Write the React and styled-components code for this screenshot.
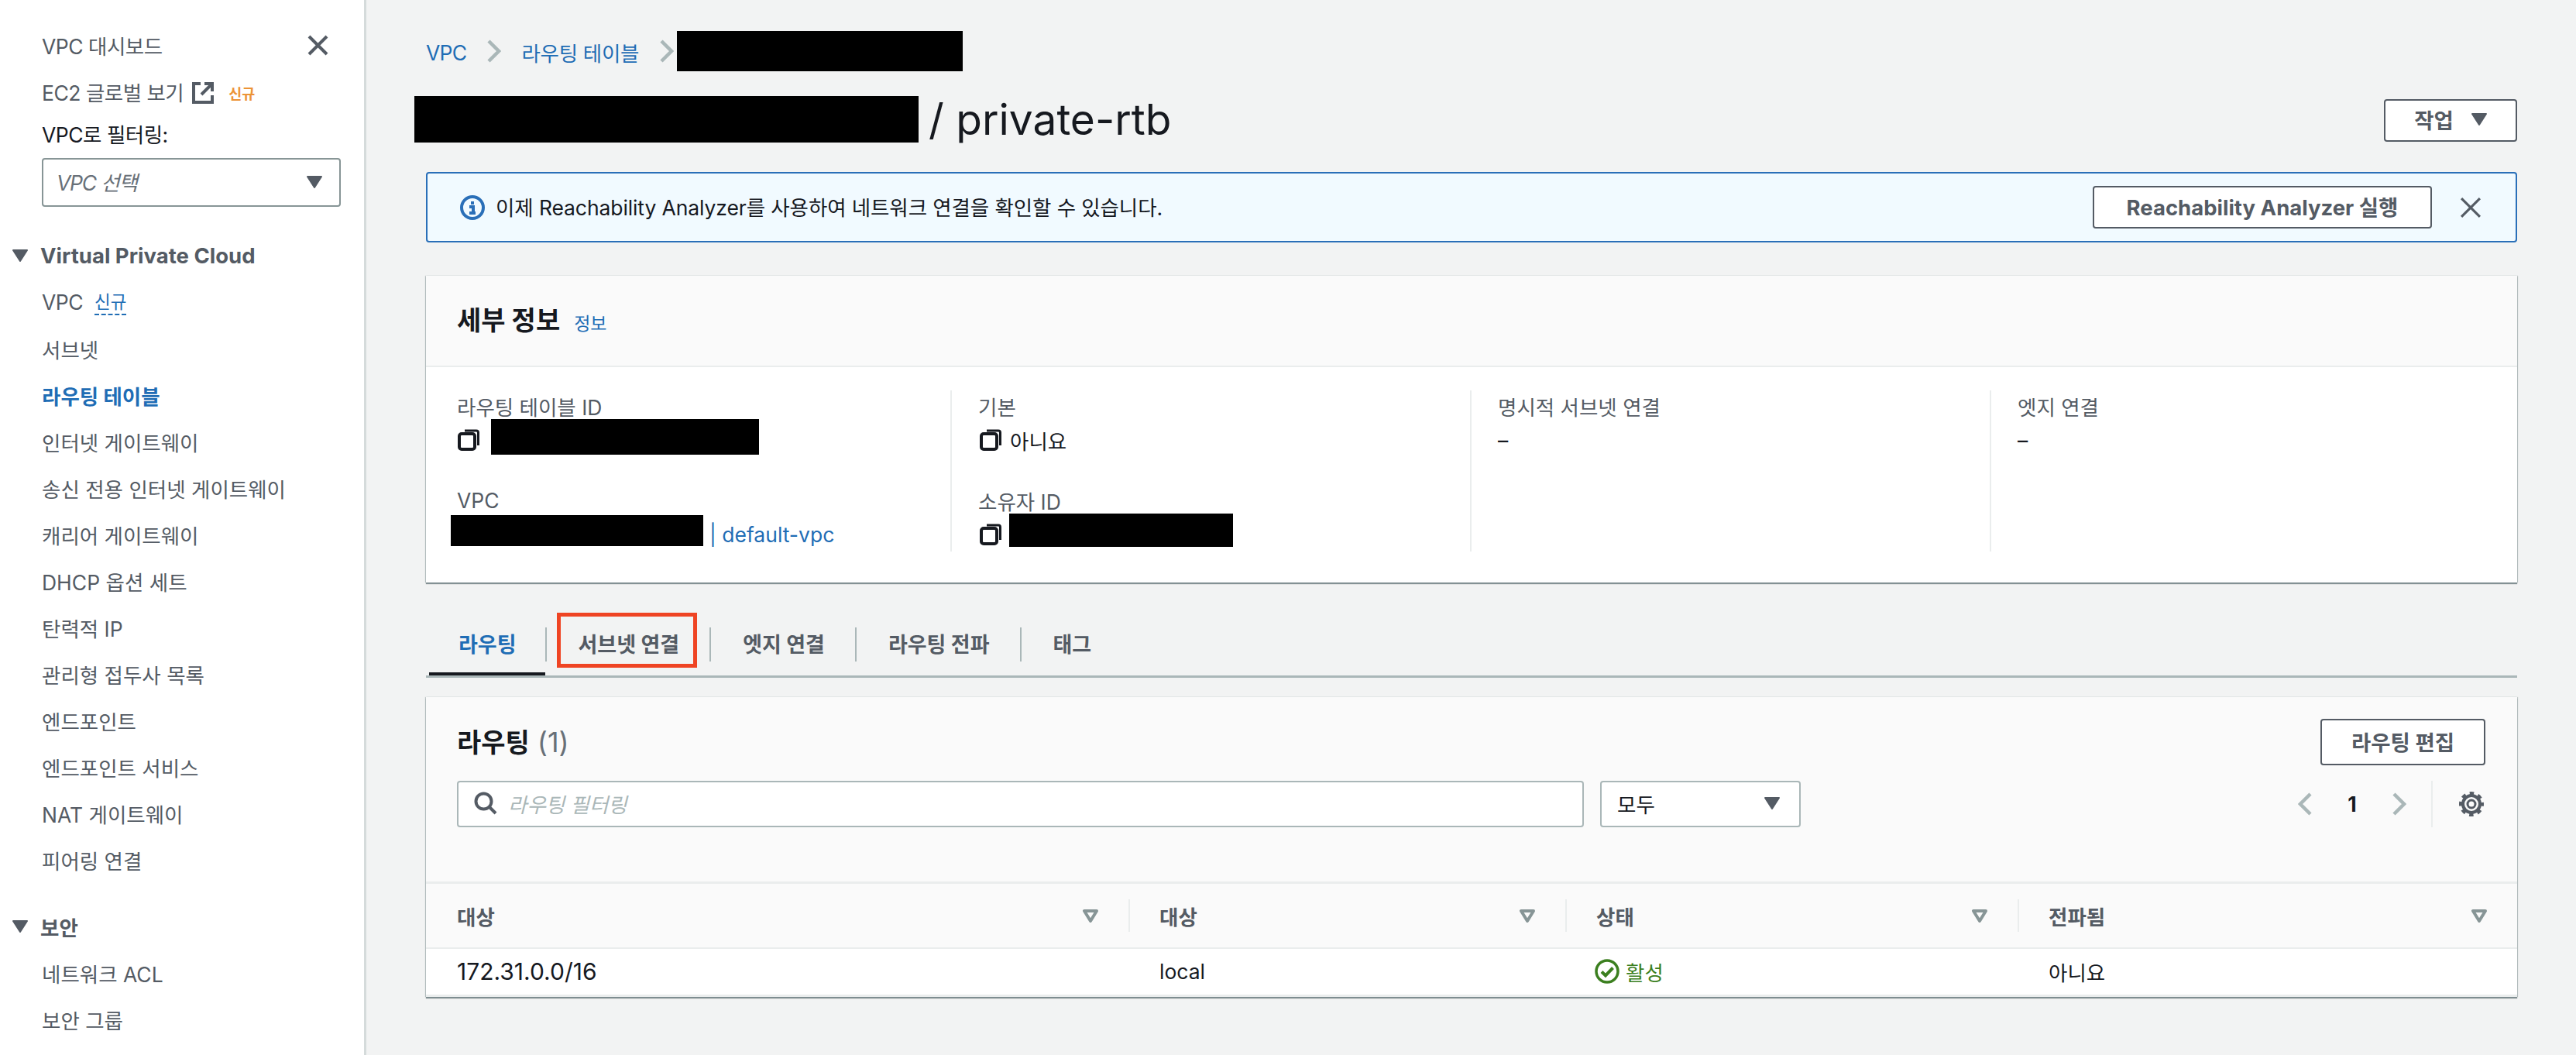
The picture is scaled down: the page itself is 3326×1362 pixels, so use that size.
import React from 'react';
import styled, { createGlobalStyle } from 'styled-components';

const GlobalStyle = createGlobalStyle`
  html, body {
    margin: 0;
    padding: 0;
    height: 100%;
    background: #f2f3f3;
    overflow: hidden;
  }
  * {
    box-sizing: border-box;
  }
  body {
    font-family: Inter, "Noto Sans CJK KR", sans-serif;
    font-size: 26.5px;
    color: #16191f;
  }
`;

const Page = styled.div`
  display: flex;
  width: 3326px;
  height: 1362px;
  overflow: hidden;
`;

/* ---------- side navigation ---------- */

const Sidebar = styled.nav`
  flex: none;
  width: 473px;
  padding-top: 30px;
  background: #fff;
  border-right: 3px solid #d5dbdb;
`;

const NavRow = styled.div`
  display: flex;
  align-items: center;
  height: 60px;
  padding: 0 0 4px 54px;
  color: ${p => (p.$active ? '#1f6db5' : '#545b64')};
  font-weight: ${p => (p.$active ? 700 : 400)};
  letter-spacing: ${p => (p.$tight ? '-0.5px' : 'normal')};
  white-space: nowrap;
`;

const NavTop = styled(NavRow)`
  justify-content: space-between;
  padding-right: 46px;
`;

const FilterLabel = styled.div`
  display: flex;
  align-items: center;
  height: 46px;
  padding: 0 0 2px 54px;
  letter-spacing: -0.5px;
`;

const VpcSelect = styled.div`
  display: flex;
  align-items: center;
  justify-content: space-between;
  width: 386px;
  height: 63px;
  margin: 8px 0 0 54px;
  padding: 0 22px 2px 17px;
  border: 2px solid #879596;
  border-radius: 4px;
  font-style: italic;
  letter-spacing: -1.2px;
  color: #687078;
`;

const SectionHead = styled.div`
  display: flex;
  align-items: center;
  gap: 16px;
  height: 60px;
  margin: ${p => p.$mt}px 0 2px;
  padding-left: 16px;
  font-size: ${p => p.$fs || 26.5}px;
  font-weight: 700;
  color: #545b64;
`;

const NewOrange = styled.span`
  margin-left: 19px;
  padding-top: 4px;
  font-size: 18.5px;
  font-weight: 700;
  letter-spacing: normal;
  color: #ec9337;
`;

const NewBlue = styled.span`
  margin: 2px 0 0 15px;
  font-size: 22.5px;
  letter-spacing: normal;
  color: #1f6db5;
  border-bottom: 2px dashed #1f6db5;
  line-height: 30px;
`;

/* ---------- main column ---------- */

const Main = styled.main`
  flex: 1;
  min-width: 0;
  padding: 40px 76px 0 77px;
`;

const Crumbs = styled.div`
  display: flex;
  align-items: center;
  height: 52px;
`;

const CrumbLink = styled.a`
  padding-top: 3px;
  color: #1f6db5;
  letter-spacing: ${p => (p.$tight ? '-0.7px' : '-0.3px')};
  white-space: nowrap;
`;

const CrumbSep = styled.span`
  display: flex;
  margin: 0 26px;
`;

const LastSep = styled(CrumbSep)`
  margin: 0 4px 0 26px;
`;

const Redact = styled.div`
  flex: none;
  width: ${p => p.$w}px;
  height: ${p => p.$h}px;
  margin: ${p => p.$m || '0'};
  background: #000;
`;

const TitleRow = styled.div`
  display: flex;
  justify-content: space-between;
  align-items: flex-start;
  height: 60px;
  margin: 32px 0 0 -15px;
`;

const TitleLeft = styled.div`
  display: flex;
  align-items: center;
  gap: 13px;
`;

const Title = styled.h1`
  margin: 0;
  font-size: 55px;
  font-weight: 400;
  line-height: 60px;
  white-space: nowrap;
`;

const Button = styled.button`
  display: inline-flex;
  align-items: center;
  justify-content: center;
  gap: 23px;
  flex: none;
  width: ${p => p.$w}px;
  height: ${p => p.$h}px;
  margin-top: ${p => p.$mt || 0}px;
  padding: 0 0 3px;
  background: #fff;
  border: 2px solid #545b64;
  border-radius: 4px;
  font: inherit;
  font-size: 27.5px;
  font-weight: 700;
  color: #545b64;
  white-space: nowrap;
`;

const Alert = styled.div`
  display: flex;
  align-items: center;
  height: 91px;
  margin-top: 38px;
  padding: 0 44px 0 42px;
  background: #f1faff;
  border: 2px solid #2a6fb8;
  border-radius: 4px;
`;

const AlertText = styled.span`
  flex: 1;
  margin-left: 14px;
  padding-bottom: 3px;
  letter-spacing: -0.1px;
  white-space: nowrap;
`;

const AlertClose = styled.span`
  display: flex;
  margin-left: 36px;
`;

const Card = styled.section`
  background: #fff;
  margin-top: ${p => p.$mt}px;
  box-shadow: 0 2px 1px rgba(0, 28, 36, 0.45), 1px 0 1px rgba(0, 28, 36, 0.2), -1px 0 1px rgba(0, 28, 36, 0.2);
`;

const CardHead = styled.header`
  display: flex;
  align-items: center;
  gap: 18px;
  height: 118px;
  padding: 0 40px 2px;
  background: #fafafa;
  border-bottom: 2px solid #eaeded;
`;

const CardTitle = styled.h2`
  margin: 0;
  padding-bottom: 4px;
  font-size: 34px;
  font-weight: 700;
  white-space: nowrap;
`;

const InfoLink = styled.a`
  font-size: 23px;
  color: #1f6db5;
  padding-top: 6px;
`;

const DetailGrid = styled.div`
  display: grid;
  grid-template-columns: 637px repeat(3, 671px);
  padding: 30px 0 40px 40px;
`;

const DetailCol = styled.div`
  display: flex;
  flex-direction: column;
  gap: 38px;
  height: 208px;
  padding-left: ${p => (p.$first ? 0 : 34)}px;
  border-left: ${p => (p.$first ? 'none' : '2px solid #eaeded')};
`;

const Field = styled.div`
  height: 84px;
`;

const FieldLabel = styled.div`
  display: flex;
  align-items: center;
  height: 44px;
  padding-bottom: 4px;
  color: #545b64;
  white-space: nowrap;
`;

const FieldValue = styled.div`
  display: flex;
  align-items: center;
  height: 40px;
  padding-left: ${p => p.$pl || 0}px;
  white-space: nowrap;
`;

const ValueLink = styled.a`
  margin-left: 8px;
  color: #1f6db5;
`;

const PlainValue = styled.span`
  margin-left: 11px;
`;

const Tabs = styled.div`
  display: flex;
  height: 84px;
  margin-top: 39px;
  padding: 1px 0 0 4px;
  border-bottom: 3px solid #aab7b8;
`;

const Tab = styled.div`
  position: relative;
  display: flex;
  align-items: center;
  height: 80px;
  padding: 0 ${p => (p.$first ? 39 : 41)}px 3px ${p => (p.$first ? 38 : 41)}px;
  font-size: 27px;
  font-weight: 700;
  color: ${p => (p.$active ? '#1f6db5' : '#545b64')};
  white-space: nowrap;

  &::before {
    content: ${p => (p.$last ? 'none' : '""')};
    position: absolute;
    right: 0;
    top: 18px;
    width: 2px;
    height: 44px;
    background: #aab7b8;
  }

  &::after {
    content: ${p => (p.$active ? '""' : 'none')};
    position: absolute;
    left: 0;
    right: 2px;
    bottom: 0;
    height: 4px;
    background: #16191f;
  }
`;

const Highlight = styled.div`
  position: absolute;
  left: 13px;
  top: -1px;
  width: 181px;
  height: 71px;
  border: 5px solid #ef4423;
`;

const TableHead = styled.div`
  height: 241px;
  padding: 28px 41px 0 40px;
  background: #fafafa;
  border-bottom: 3px solid #eaeded;
`;

const HeadTop = styled.div`
  display: flex;
  align-items: center;
  justify-content: space-between;
  height: 60px;
`;

const Count = styled.span`
  margin-left: 10px;
  font-size: 36px;
  font-weight: 400;
  color: #687078;
`;

const FilterRow = styled.div`
  display: flex;
  align-items: center;
  height: 60px;
  margin-top: 20px;
`;

const SearchBox = styled.div`
  display: flex;
  align-items: center;
  gap: 14px;
  width: 1455px;
  height: 60px;
  padding: 0 0 2px 20px;
  background: #fff;
  border: 2px solid #aab7b8;
  border-radius: 4px;
  font-style: italic;
  color: #aab7b8;
`;

const ModeSelect = styled.div`
  display: flex;
  align-items: center;
  justify-content: space-between;
  width: 259px;
  height: 60px;
  margin-left: 21px;
  padding: 0 25px 2px 20px;
  background: #fff;
  border: 2px solid #aab7b8;
  border-radius: 4px;
`;

const Pager = styled.div`
  display: flex;
  align-items: center;
  height: 60px;
  margin-left: auto;
  padding-right: 2px;
`;

const PageNum = styled.span`
  width: 102px;
  text-align: center;
  font-weight: 700;
`;

const PagerGear = styled.span`
  display: flex;
  align-items: center;
  height: 60px;
  margin-left: 32px;
  padding-left: 34px;
  border-left: 2px solid #eaeded;
`;

const TableGrid = styled.div`
  display: grid;
  grid-template-columns: 907px 564px 584px 645px;
`;

const HeadCell = styled.div`
  position: relative;
  display: flex;
  align-items: center;
  justify-content: space-between;
  height: 84px;
  padding: 0 38px 0 40px;
  background: #fafafa;
  border-bottom: 2px solid #eaeded;
  font-weight: 700;
  color: #545b64;

  &::before {
    content: ${p => (p.$first ? 'none' : '""')};
    position: absolute;
    left: 0;
    top: 20px;
    width: 2px;
    height: 42px;
    background: #eaeded;
  }
`;

const BodyCell = styled.div`
  display: flex;
  align-items: center;
  gap: 8px;
  height: 62px;
  padding: 0 0 1px ${p => p.$pl || 40}px;
  border-bottom: 3px solid #eaeded;
  font-size: ${p => p.$fs || 26.5}px;
  color: ${p => p.$color || '#16191f'};
`;

/* ---------- drawn icons ---------- */

const Caret = ({ size = 20, color = '#545b64' }) => (
  <svg width={size} height={size * 0.8} viewBox="0 0 20 16">
    <path d="M1 1h18L10 15z" fill={color} stroke={color} strokeWidth="2" strokeLinejoin="round" />
  </svg>
);

const SortIcon = () => (
  <svg width="22" height="18" viewBox="0 0 22 18">
    <path d="M3 3h16l-8 13z" fill="none" stroke="#879596" strokeWidth="4" strokeLinejoin="round" />
  </svg>
);

const CloseIcon = ({ size = 27, sw = 4 }) => (
  <svg width={size} height={size} viewBox="0 0 27 27">
    <path d="M2 2l23 23M25 2L2 25" fill="none" stroke="#545b64" strokeWidth={sw} />
  </svg>
);

const ExternalSvg = styled.svg`
  margin: 4px 0 0 11px;
`;

const ExternalIcon = () => (
  <ExternalSvg width="28" height="28" viewBox="0 0 28 28">
    <path d="M11 2H2v24h24v-9M16 2h10v10M26 2L12 16" fill="none" stroke="#545b64" strokeWidth="4" />
  </ExternalSvg>
);

const Chevron = ({ dir = 'right', w = 19, h = 30, color = '#aab7b8' }) => (
  <svg width={w} height={h} viewBox="0 0 19 30">
    <path d={dir === 'right' ? 'M3 2l13 13L3 28' : 'M16 2L3 15l13 13'} fill="none" stroke={color} strokeWidth="4.500" />
  </svg>
);

const InfoIcon = () => (
  <svg width="32" height="32" viewBox="0 0 32 32">
    <circle cx="16" cy="16" r="14" fill="none" stroke="#2a6fb8" strokeWidth="4" />
    <path d="M16 8v4M12 15h5v8M12 23h8" fill="none" stroke="#2a6fb8" strokeWidth="4" />
  </svg>
);

const CopyIcon = () => (
  <svg width="28" height="28" viewBox="0 0 28 28">
    <path d="M9 2h15a2.500 2.500 0 0 1 2.500 2.500V21" fill="none" stroke="#16191f" strokeWidth="3" />
    <rect x="2" y="6" width="20" height="20" rx="3" fill="none" stroke="#16191f" strokeWidth="4" />
  </svg>
);

const SearchIcon = () => (
  <svg width="30" height="30" viewBox="0 0 30 30">
    <circle cx="12.5" cy="12.5" r="10" fill="none" stroke="#545b64" strokeWidth="4" />
    <path d="M19.5 19.5L28 28" stroke="#545b64" strokeWidth="4" />
  </svg>
);

const GearIcon = () => (
  <svg width="32" height="32" viewBox="0 0 32 32">
    <circle cx="16" cy="16" r="11" fill="none" stroke="#545b64" strokeWidth="4" />
    <circle cx="16" cy="16" r="14" fill="none" stroke="#545b64" strokeWidth="4" strokeDasharray="5.500 5.500" strokeDashoffset="2.750" />
    <circle cx="16" cy="16" r="5" fill="none" stroke="#545b64" strokeWidth="3" />
  </svg>
);

const CheckIcon = () => (
  <svg width="32" height="32" viewBox="0 0 32 32">
    <circle cx="16" cy="16" r="14" fill="none" stroke="#3b7f1f" strokeWidth="3.500" />
    <path d="M9 16.500l5 5 9.500-10" fill="none" stroke="#3b7f1f" strokeWidth="4" />
  </svg>
);

/* ---------- data ---------- */

const vpcItems = [
  '서브넷',
  '라우팅 테이블',
  '인터넷 게이트웨이',
  '송신 전용 인터넷 게이트웨이',
  '캐리어 게이트웨이',
  'DHCP 옵션 세트',
  '탄력적 IP',
  '관리형 접두사 목록',
  '엔드포인트',
  '엔드포인트 서비스',
  'NAT 게이트웨이',
  '피어링 연결',
];

const columns = ['대상', '대상', '상태', '전파됨'];

export default function App() {
  return (
    <Page>
      <GlobalStyle />
      <Sidebar>
        <NavTop $tight>
          VPC 대시보드
          <CloseIcon />
        </NavTop>
        <NavRow $tight>
          EC2 글로벌 보기
          <ExternalIcon />
          <NewOrange>신규</NewOrange>
        </NavRow>
        <FilterLabel>VPC로 필터링:</FilterLabel>
        <VpcSelect>
          VPC 선택
          <Caret />
        </VpcSelect>
        <SectionHead $mt={33} $fs={27.5}>
          <Caret />
          Virtual Private Cloud
        </SectionHead>
        <NavRow $tight>
          VPC
          <NewBlue>신규</NewBlue>
        </NavRow>
        {vpcItems.map(item => (
          <NavRow key={item} $active={item === '라우팅 테이블'}>
            {item}
          </NavRow>
        ))}
        <SectionHead $mt={24}>
          <Caret />
          보안
        </SectionHead>
        <NavRow>네트워크 ACL</NavRow>
        <NavRow>보안 그룹</NavRow>
      </Sidebar>

      <Main>
        <Crumbs>
          <CrumbLink $tight>VPC</CrumbLink>
          <CrumbSep>
            <Chevron />
          </CrumbSep>
          <CrumbLink>라우팅 테이블</CrumbLink>
          <LastSep>
            <Chevron />
          </LastSep>
          <Redact $w={369} $h={52} />
        </Crumbs>

        <TitleRow>
          <TitleLeft>
            <Redact $w={651} $h={60} />
            <Title>/ private-rtb</Title>
          </TitleLeft>
          <Button $w={172} $h={55} $mt={4}>
            작업
            <Caret />
          </Button>
        </TitleRow>

        <Alert>
          <InfoIcon />
          <AlertText>이제 Reachability Analyzer를 사용하여 네트워크 연결을 확인할 수 있습니다.</AlertText>
          <Button $w={438} $h={55}>Reachability Analyzer 실행</Button>
          <AlertClose>
            <CloseIcon size={28} sw={3} />
          </AlertClose>
        </Alert>

        <Card $mt={43}>
          <CardHead>
            <CardTitle>세부 정보</CardTitle>
            <InfoLink>정보</InfoLink>
          </CardHead>
          <DetailGrid>
            <DetailCol $first>
              <Field>
                <FieldLabel>라우팅 테이블 ID</FieldLabel>
                <FieldValue $pl={1}>
                  <CopyIcon />
                  <Redact $w={346} $h={46} $m="0 0 8px 15px" />
                </FieldValue>
              </Field>
              <Field>
                <FieldLabel>VPC</FieldLabel>
                <FieldValue>
                  <Redact $w={326} $h={40} $m="0 0 10px -8px" />
                  <ValueLink>| default-vpc</ValueLink>
                </FieldValue>
              </Field>
            </DetailCol>
            <DetailCol>
              <Field>
                <FieldLabel>기본</FieldLabel>
                <FieldValue $pl={2}>
                  <CopyIcon />
                  <PlainValue>아니요</PlainValue>
                </FieldValue>
              </Field>
              <Field>
                <FieldLabel>소유자 ID</FieldLabel>
                <FieldValue $pl={2}>
                  <CopyIcon />
                  <Redact $w={289} $h={43} $m="0 0 12px 10px" />
                </FieldValue>
              </Field>
            </DetailCol>
            <DetailCol>
              <Field>
                <FieldLabel>명시적 서브넷 연결</FieldLabel>
                <FieldValue>–</FieldValue>
              </Field>
            </DetailCol>
            <DetailCol>
              <Field>
                <FieldLabel>엣지 연결</FieldLabel>
                <FieldValue>–</FieldValue>
              </Field>
            </DetailCol>
          </DetailGrid>
        </Card>

        <Tabs>
          <Tab $first $active>라우팅</Tab>
          <Tab>
            서브넷 연결
            <Highlight />
          </Tab>
          <Tab>엣지 연결</Tab>
          <Tab>라우팅 전파</Tab>
          <Tab $last>태그</Tab>
        </Tabs>

        <Card $mt={25}>
          <TableHead>
            <HeadTop>
              <CardTitle>
                라우팅<Count>(1)</Count>
              </CardTitle>
              <Button $w={213} $h={60}>라우팅 편집</Button>
            </HeadTop>
            <FilterRow>
              <SearchBox>
                <SearchIcon />
                라우팅 필터링
              </SearchBox>
              <ModeSelect>
                모두
                <Caret />
              </ModeSelect>
              <Pager>
                <Chevron dir="left" />
                <PageNum>1</PageNum>
                <Chevron />
                <PagerGear>
                  <GearIcon />
                </PagerGear>
              </Pager>
            </FilterRow>
          </TableHead>
          <TableGrid>
            {columns.map((col, i) => (
              <HeadCell key={i} $first={i === 0}>
                {col}
                <SortIcon />
              </HeadCell>
            ))}
            <BodyCell $fs={30}>172.31.0.0/16</BodyCell>
            <BodyCell>local</BodyCell>
            <BodyCell $color="#3b7f1f" $pl={38}>
              <CheckIcon />
              활성
            </BodyCell>
            <BodyCell>아니요</BodyCell>
          </TableGrid>
        </Card>
      </Main>
    </Page>
  );
}
